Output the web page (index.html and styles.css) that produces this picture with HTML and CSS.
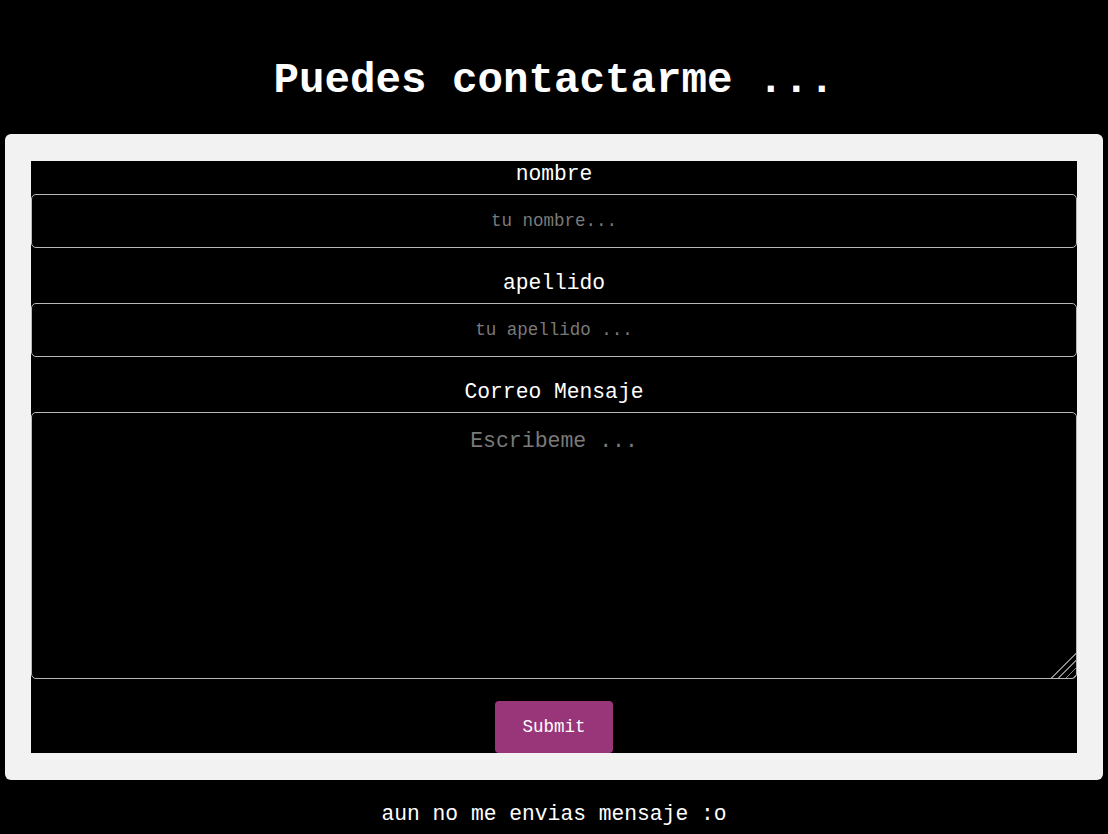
FILE: index.html
```html
<!DOCTYPE html>
<html lang="es">
<head>
<meta charset="utf-8">
<title>Contacto</title>
<link rel="stylesheet" href="styles.css">
</head>
<body>
  <h1 class="title">Puedes contactarme ...</h1>
  <div class="panel">
    <form class="contact-form">
      <label class="field-label" for="nombre">nombre</label>
      <input class="field-input" id="nombre" type="text" placeholder="tu nombre...">
      <label class="field-label" for="apellido">apellido</label>
      <input class="field-input" id="apellido" type="text" placeholder="tu apellido ...">
      <label class="field-label" for="mensaje">Correo Mensaje</label>
      <textarea class="field-area" id="mensaje" placeholder="Escribeme ..."></textarea>
      <button class="submit-btn" type="button">Submit</button>
    </form>
  </div>
  <p class="status">aun no me envias mensaje :o</p>
</body>
</html>
```
FILE: styles.css
```css
html, body {
  background: #000;
}
body {
  margin: 0;
  padding: 0 5px;
  color: #fff;
  font-family: "Liberation Mono", "Courier New", monospace;
}
.title {
  margin: 57px 0 28px;
  font-size: 42.5px;
  line-height: 49px;
  font-weight: bold;
  text-align: center;
}
.panel {
  background: #f2f2f2;
  border-radius: 6px;
  padding: 27px 26px;
}
.contact-form {
  background: #000;
  display: flex;
  flex-direction: column;
  align-items: stretch;
  text-align: center;
}
.field-label {
  display: block;
  box-sizing: border-box;
  height: 33px;
  padding-top: 1px;
  font-size: 21.3px;
  line-height: 24px;
  color: #fff;
}
.field-input,
.field-area {
  box-sizing: border-box;
  width: 100%;
  margin: 0 0 22px;
  background-color: #000;
  color: #fff;
  border: 1px solid #b8b8b8;
  border-radius: 5px;
  font-family: "Liberation Mono", "Courier New", monospace;
  text-align: center;
}
.field-input {
  height: 54px;
  font-size: 17.5px;
  padding: 0 10px;
}
.field-area {
  height: 267px;
  font-size: 21.5px;
  padding: 16px 10px;
  resize: none;
  display: block;
  background-image:
    linear-gradient(135deg, #000 50%, transparent 50%),
    repeating-linear-gradient(135deg, #000 0 4px, #8a8a8a 4px 5px);
  background-size: 26px 26px, 26px 26px;
  background-position: right 0 bottom 0, right 0 bottom 0;
  background-repeat: no-repeat;
}
.field-input::placeholder,
.field-area::placeholder {
  color: #7a7a7a;
}
.submit-btn {
  align-self: center;
  width: 118px;
  height: 52px;
  border: none;
  border-radius: 4px;
  background: #993579;
  color: #fff;
  font-family: "Liberation Mono", "Courier New", monospace;
  font-size: 17.5px;
  padding: 0;
}
.status {
  margin: 22px 0 0;
  font-size: 21.3px;
  line-height: 24px;
  text-align: center;
}
```
